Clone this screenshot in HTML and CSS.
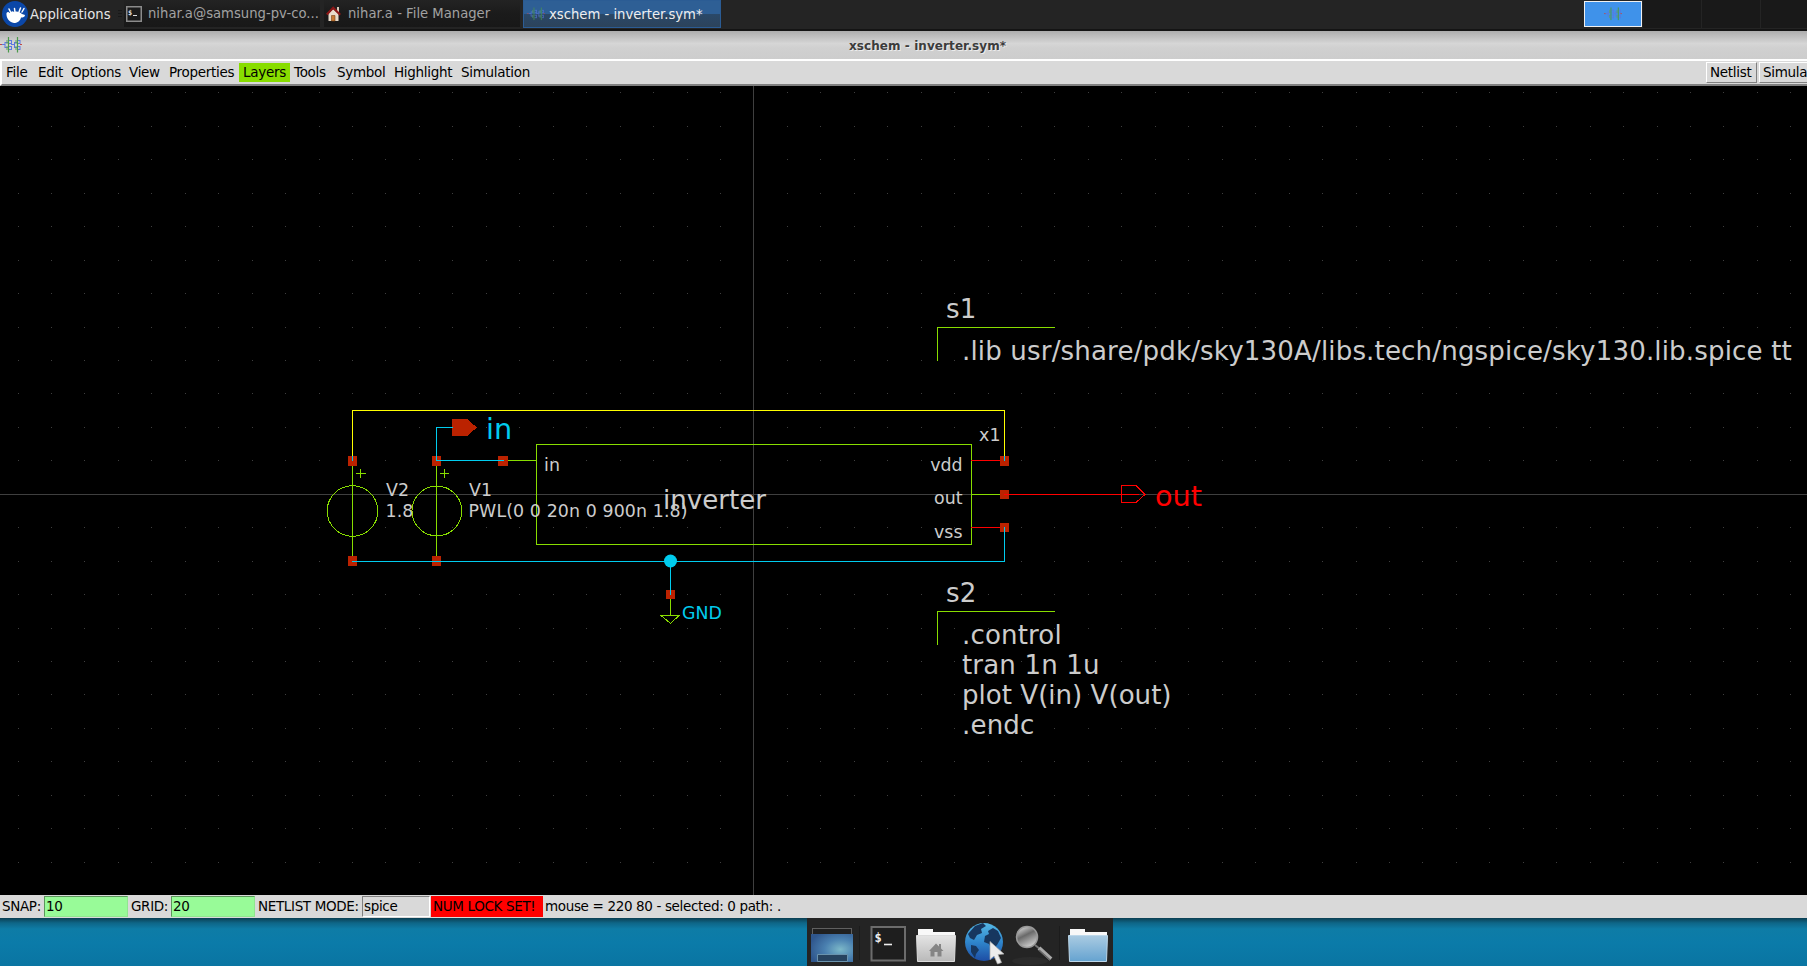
FILE: index.html
```html
<!DOCTYPE html>
<html lang="en">
<head>
<meta charset="utf-8">
<title>xschem - inverter.sym*</title>
<link rel="stylesheet" href="styles.css">
</head>
<body>
<svg width="0" height="0" class="defs">
  <defs>
    <symbol id="xs" viewBox="0 0 22 16">
      <g fill="none" stroke-width="1">
        <path stroke="#5b78e0" d="M2 7.500h3M5 5v6M5 5.500h3M5 10.500h3M9 3.500h3M11.500 3v4M9 6.500h3M9 9.500h3M11.500 9v4M9 12.500h3M11 7.500h3M14.500 5v6M14 5.500h3M14 10.500h3M18 3.500h2M20 3v4M18 6.500h2M18 9.500h2M20 9v4M18 12.500h2"/>
        <path stroke="#4b9a4b" stroke-width="1.200" d="M8.500 0v15.500M17.500 0v15.500"/>
        <path stroke="#5fa35f" d="M7 3v4M7 9v4M16 3v4M16 9v4"/>
        <path stroke="#c04848" d="M0 7.500h2M20 7.500h2"/>
      </g>
    </symbol>
  </defs>
</svg>
<div class="desktop">
  <header class="panel">
    <div class="apps">
      <svg class="logo" width="26" height="26" viewBox="0 0 26 26"><circle cx="13" cy="13" r="13" fill="#0b47a8"/><path fill="#fff" d="M4.500 12c1-1.500 2.500-1 3 0l1.500-1c1-1 2-1 3 0 3-1 6 0 8 2l3 1c0 2-2 2.500-4 2.500-1 4-4 5.500-7 5.500-5-1-8-5-7.500-10z"/><path stroke="#fff" stroke-width="1.500" stroke-linecap="round" d="M7 8l2 4M12.500 7.500l.5 4M18.500 7l-1.500 4M22 7.500l-2 3.500" /></svg>
      <span>Applications</span>
      <i class="grip"></i>
    </div>
    <div class="task t1">
      <svg width="16" height="16" viewBox="0 0 16 16"><rect x=".75" y=".75" width="14.500" height="14.500" fill="#1b1b1b" stroke="#8b8b8b" stroke-width="1.500"/><text x="2" y="8.500" class="ticon">$</text><path d="M7 9.500h4" stroke="#ddd"/></svg>
      <span>nihar.a@samsung-pv-co...</span>
    </div>
    <div class="task t2">
      <svg width="16" height="16" viewBox="0 0 16 16"><path fill="#e9dccb" d="M2.500 7.500L7 3l5.500 5V15h-10z"/><path fill="#d8cbb9" d="M11 1h2v5h-2z"/><path fill="none" stroke="#8d1717" stroke-width="2.200" d="M.8 8.500L7.200 1.800l7 7"/><path fill="#c67a34" stroke="#7a4212" stroke-width=".6" d="M5.500 9.500h3.500V15H5.500z"/></svg>
      <span>nihar.a - File Manager</span>
    </div>
    <div class="task t3"><svg width="18" height="16" class="dim"><use href="#xs" width="18" height="16"/></svg><span>xschem - inverter.sym*</span></div>
    <div class="pager"><div class="ws on"><svg width="18" height="16"><use href="#xs" width="18" height="16"/></svg></div><div class="ws"></div><div class="ws"></div><div class="ws"></div></div>
  </header>
  <div class="titlebar"><svg width="22" height="16"><use href="#xs" width="22" height="16"/></svg><span class="title">xschem - inverter.sym*</span></div>
  <nav class="menubar">
    <span class="m m1">File</span><span class="m m2">Edit</span><span class="m m3">Options</span><span class="m m4">View</span><span class="m m5">Properties</span><span class="m m6">Layers</span><span class="m m7">Tools</span><span class="m m8">Symbol</span><span class="m m9">Highlight</span><span class="m m10">Simulation</span>
    <div class="buttons"><span class="btn">Netlist</span><span class="btn">Simula</span></div>
  </nav>
  <svg class="canvas" width="1807" height="809" viewBox="0 86 1807 809">
    <path id="grid" class="grid"/>
    <path class="axis" d="M0 494.500H1807M753.500 86V895"/>
    <g class="crisp">
      <g class="pin">
        <path d="M348 456h9v10h-9zM432 456h9v10h-9zM498 456h10v10h-10zM348 556h9v10h-9zM432 556h9v10h-9zM666 590h9v9h-9zM1000 456h9v10h-9zM1000 490h9v9h-9zM1000 523h9v9h-9z"/>
        <path d="M452 419h15l10 8.500-10 8.500h-15z"/>
      </g>
      <path class="green" d="M352.500 466V556M436.500 466V556M356 473.500h10M360.500 469v9M440 473.500h9M444.500 469v9M508 460.500h28M536.500 444.500H971.500V544.500H536.500zM972 494.500h28M670.500 599v16M661 615.500h18l-8.500 8z"/>
      <circle class="green" cx="352.500" cy="511" r="25.300"/>
      <circle class="green" cx="436.900" cy="511" r="24.900"/>
      <path class="green" d="M937.500 361V327.500H1055M937.500 645V611.500H1055"/>
      <path class="red" d="M971 460.500h29M971 527.500h29M1004 494.500h135M1121.500 485.500h14.500l9 9-9 8h-14.500z"/>
      <path class="yellow" d="M352.500 456V410.500H1004.500V456"/>
      <path class="cyan" d="M352.500 456v5M1004.500 456v5M453 427.500H436.500V460.500H504M352 561.500H1004.500V527M670.500 561v34"/>
    </g>
    <circle class="node" cx="670.500" cy="561" r="6.500"/>
    <g class="label">
      <text x="386" y="496">V2</text><text x="385.500" y="517">1.8</text>
      <text x="469" y="496">V1</text><text x="468.500" y="517">PWL(0 0 20n 0 900n 1.8)</text>
      <text x="544" y="471">in</text><text x="979" y="441">x1</text>
      <text x="962.500" y="471" class="end">vdd</text><text x="962.500" y="504" class="end">out</text><text x="962.500" y="538" class="end">vss</text>
      <text x="682" y="619" class="cy gnd">GND</text>
    </g>
    <g class="label big">
      <text x="663" y="509" class="name">inverter</text>
      <text x="946" y="318">s1</text>
      <text x="962" y="360">.lib usr/share/pdk/sky130A/libs.tech/ngspice/sky130.lib.spice tt</text>
      <text x="946" y="602">s2</text>
      <text x="962" y="644">.control</text><text x="962" y="674">tran 1n 1u</text><text x="962" y="704" class="plot">plot V(in) V(out)</text><text x="962" y="734">.endc</text>
    </g>
    <g class="label net"><text x="486" y="439" class="cy">in</text><text x="1155" y="505.500" class="rd">out</text></g>
  </svg>
  <div class="status">
    <span class="s1">SNAP:</span><span class="field g">10</span><span class="s2">GRID:</span><span class="field g">20</span><span class="s3">NETLIST MODE:</span><span class="field mode">spice</span><span class="lock">NUM LOCK SET!</span><span class="mouse">mouse = 220 80 - selected: 0 path: .</span>
  </div>
  <footer class="wall">
    <div class="dock">
      <svg width="306" height="48" viewBox="807 918 306 48">
        <defs>
          <radialGradient id="scr" cx=".7" cy=".55" r=".75"><stop offset="0" stop-color="#7cb8c8"/><stop offset=".5" stop-color="#4a80b0"/><stop offset="1" stop-color="#2f568c"/></radialGradient>
          <linearGradient id="gf" x2="0" y2="1"><stop offset="0" stop-color="#e4e4e4"/><stop offset="1" stop-color="#b9b9b9"/></linearGradient>
          <linearGradient id="bf" x2="0" y2="1"><stop offset="0" stop-color="#aacbe2"/><stop offset="1" stop-color="#65a3d0"/></linearGradient>
          <linearGradient id="gl" x2="0" y2="1"><stop offset="0" stop-color="#55b9e6"/><stop offset=".5" stop-color="#2f86cc"/><stop offset="1" stop-color="#1d4da4"/></linearGradient>
          <linearGradient id="ln" x2=".5" y2="1"><stop offset="0" stop-color="#f0f0f0"/><stop offset=".5" stop-color="#6a6a6a"/><stop offset="1" stop-color="#c8c8c8"/></linearGradient>
        </defs>
        <path stroke="#1c1c1c" d="M859.500 926v34M1059.500 926v34"/>
        <rect x="812.500" y="928.500" width="39" height="8" fill="#202020" stroke="#606060"/>
        <rect x="811" y="934" width="42" height="28" fill="url(#scr)"/>
        <path fill="#27435f" stroke="#6a93ad" d="M817.500 961.500v-7h30v7z"/>
        <rect x="871.500" y="927" width="33.500" height="33.500" fill="#1e1e1e" stroke="#6c6c6c" stroke-width="2"/>
        <text x="874.500" y="942" class="dterm">$</text><path stroke="#eee" stroke-width="1.600" d="M884 944.500h8"/>
        <path fill="#f8f8f8" d="M918 937v-8h15v3h22v6z"/><path fill="url(#gf)" stroke="#dcdcdc" d="M916.500 935.500h39l-1 26h-37z"/>
        <path fill="#858585" d="M929 951l7-7.500 3 3V944h2v4.500l2.500 2.500h-2v5.500h-4V952h-3v4.500h-4V951z"/>
        <circle cx="984" cy="942" r="19" fill="url(#gl)"/>
        <path fill="#17375f" d="M968 934l7-8 8-3 3 3-5 3 1 4-5 2-3 5-4-2zM971 945l5 1 3 4-3 4-1 4-4-6zM988 931l5-3 5 3 3 7-4 7-5 5-3-6-5-2 1-6 4-2z"/>
        <path fill="#ececec" stroke="#aaa" stroke-width=".7" d="M990 941.500v18l4-3.500 3.500 8 4-1.500-3.500-8 6-.5z"/>
        <ellipse cx="1030" cy="961" rx="18" ry="4" fill="#2b2b2b"/>
        <path stroke="#777" stroke-width="2" d="M1035 945l5 4"/><path stroke="#aaa" stroke-width="4" d="M1039 948l12 11"/><path stroke="#666" stroke-width="1.500" d="M1039 950l11 10"/>
        <circle cx="1027" cy="937" r="10.500" fill="url(#ln)" stroke="#999" stroke-width="1.500"/>
        <path fill="#f8f8f8" d="M1070 937v-8h15v3h22v6z"/><path fill="url(#bf)" stroke="#bed8ea" d="M1068.500 935.500h39l-1 26h-37z"/>
      </svg>
    </div>
  </footer>
</div>
<script src="grid.js"></script>
</body>
</html>
```
FILE: styles.css
```css
body { margin: 0; overflow: hidden; background: #000; font-family: "DejaVu Sans", sans-serif; }
svg { flex: none; }
.defs { position: absolute; }
.desktop { width: 1807px; height: 966px; display: flex; flex-direction: column; overflow: hidden; }
.panel { height: 31px; box-sizing: border-box; background: #242424; border-bottom: 2px solid #141414; display: flex; align-items: flex-start; color: #a2a2a2; font-size: 13.2px; white-space: nowrap; }
.apps { width: 124px; height: 28px; flex: none; box-sizing: border-box; padding-left: 2px; display: flex; align-items: center; color: #e6e6e6; }
.logo { margin-right: 2px; }
.grip { width: 4px; height: 8px; margin-left: 7px; background: repeating-linear-gradient(#181818 0 1px, #242424 1px 3px); }
.task { height: 27px; flex: none; box-sizing: border-box; display: flex; align-items: center; background: linear-gradient(#232323, #1b1b1b 50%, #181818); }
.t1 { width: 196px; margin-right: 4px; padding-left: 2px; gap: 6px; }
.t2 { width: 196px; margin-right: 3px; padding-left: 2px; gap: 6px; }
.t3 { width: 198px; height: 28px; padding-left: 3px; gap: 4px; color: #eee; border: 1px solid #2b5c94; background: linear-gradient(#2e5f95 0 48%, #2a4868 52%, #2c435b); }
.dim { opacity: .7; }
.pager { margin-left: auto; display: flex; flex: none; width: 223px; height: 28px; gap: 1px; overflow: hidden; }
.ws { width: 58px; height: 28px; flex: none; background: #191919; }
.ws.on { box-sizing: border-box; height: 26px; margin-top: 1px; border: 1px solid #f0f0f0; background: #3f92ea; display: flex; align-items: center; justify-content: center; }
.titlebar { height: 28px; background: linear-gradient(#adadad, #d6d6d6 45%, #d0d0d0 60%, #cdcdcd); display: flex; align-items: center; box-sizing: border-box; }
.title { flex: 1; text-align: center; padding: 2px 0 0 26px; font: bold 12px "DejaVu Sans", sans-serif; letter-spacing: .08px; color: #3c3c3c; text-shadow: 1px 1px #ececec; }
.menubar { height: 27px; box-sizing: border-box; border-top: 2px solid #fff; border-left: 2px solid #fff; border-bottom: 2px solid #808080; background: #d9d9d9; display: flex; align-items: center; font-size: 13.5px; letter-spacing: -.3px; overflow: hidden; white-space: nowrap; }
.m { height: 19px; line-height: 19px; box-sizing: border-box; padding-left: 4px; flex: none; }
.m1 { width: 32px; } .m2 { width: 33px; } .m3 { width: 58px; } .m4 { width: 40px; } .m5 { width: 74px; }
.m6 { width: 51px; background: #88dd00; } .m7 { width: 43px; } .m8 { width: 57px; } .m9 { width: 67px; } .m10 { width: 90px; }
.buttons { margin-left: auto; width: 101px; display: flex; gap: 2px; flex: none; }
.btn { height: 21px; width: 51px; flex: none; line-height: 19px; padding-left: 3px; box-sizing: border-box; border: 1px solid; border-color: #fff #808080 #808080 #fff; }
.btn + .btn { width: 64px; }
.canvas { display: block; background: #000; }
.grid { fill: none; stroke: #3f3f3f; shape-rendering: crispEdges; }
.axis { stroke: #3f3f3f; }
.crisp { shape-rendering: crispEdges; fill: none; }
.pin { fill: #bb2200; }
.green { stroke: #88dd00; } .red { stroke: #f00; } .yellow { stroke: #ff0; } .cyan { stroke: #00ccee; }
.node { fill: #00ccee; }
.label { font-size: 17.4px; fill: #ccc; letter-spacing: .1px; }
.label .end, .label .gnd, .label .name, .label .plot { letter-spacing: 0; }
.big { font-size: 26.1px; letter-spacing: .14px; }
.net { font-size: 28.7px; letter-spacing: 0; }
.end { text-anchor: end; }
.cy { fill: #00ccee; } .rd { fill: #f00; }
.status { height: 23px; box-sizing: border-box; background: #d9d9d9; display: flex; align-items: center; font-size: 13.5px; letter-spacing: -.35px; white-space: nowrap; }
.status span { height: 21px; line-height: 21px; box-sizing: border-box; flex: none; padding-left: 2px; }
.status .s1 { width: 44px; } .status .s2 { width: 43px; padding-left: 3px; } .status .s3 { width: 107px; padding-left: 3px; }
.status .field { width: 84px; line-height: 19px; border: 1px solid; padding-left: 1px; border-color: #808080 #fff #fff #808080; }
.status .g { background: #98fb98; border-color: #5b965b #8fe68f #8fe68f #5b965b; }
.status .mode { width: 68px; margin-right: 1px; }
.status .lock { width: 112px; background: #f00; }
.wall { height: 48px; display: flex; justify-content: center; background: linear-gradient(#0b3f52, #0e6688 5px, #0e7ca6 11px, #0b7ba9 25px, #0a75a2); }
.dock { width: 306px; margin-left: 113px; background: #242424; }
.dock svg { display: block; }
.ticon { font: bold 7px "DejaVu Sans Mono", monospace; fill: #ddd; }
.dterm { font: bold 12px "DejaVu Sans Mono", monospace; fill: #eee; }
```
FILE: grid.js
```js
// Grid dots every 20 units, snapped down to whole pixels.
const step = 33.45;
let d = "";
for (let j = -12; j <= 11; j++) {
  if (j === 0) continue;
  for (let i = -22; i <= 31; i++) {
    if (i === 0) continue;
    d += `M${Math.floor(753.93 + i * step)} ${Math.floor(494.25 + j * step) + 0.5}h1`;
  }
}
document.getElementById("grid").setAttribute("d", d);
```
